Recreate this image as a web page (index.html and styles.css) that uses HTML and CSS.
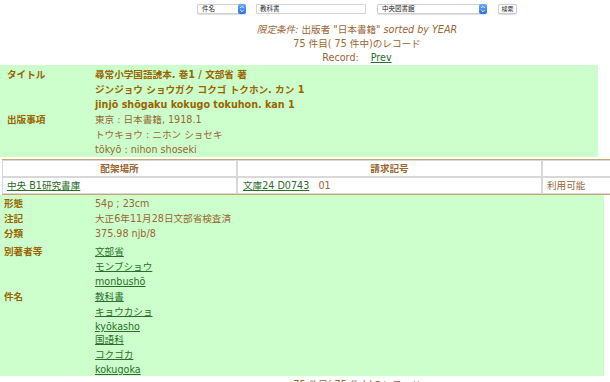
FILE: index.html
```html
<!DOCTYPE html>
<html lang="ja">
<head>
<meta charset="utf-8">
<title>書誌詳細</title>
<link rel="stylesheet" href="styles.css">
</head>
<body>
<div class="page">
  <form class="search">
    <div class="sel sel-field"><span>件名</span><span class="step"><svg viewBox="0 0 8 10" width="8" height="10"><path d="M2.3 4 L4 2.3 L5.7 4 M2.3 6 L4 7.7 L5.7 6" fill="none" stroke="#fff" stroke-width="0.9"/></svg></span></div>
    <div class="inp">教科書</div>
    <div class="sel sel-lib"><span>中央図書館</span><span class="step"><svg viewBox="0 0 8 10" width="8" height="10"><path d="M2.3 4 L4 2.3 L5.7 4 M2.3 6 L4 7.7 L5.7 6" fill="none" stroke="#fff" stroke-width="0.9"/></svg></span></div>
    <div class="btn">検索</div>
  </form>

  <div class="info">
    <div><i>限定条件:</i> 出版者 "日本書籍" <i>sorted by YEAR</i></div>
    <div>75 件目( 75 件中)のレコード</div>
    <div>Record:<span class="sp"></span><a href="#">Prev</a></div>
  </div>

  <div class="box box1">
    <div class="row">
      <div class="lbl">タイトル</div>
      <div class="val b">
        <div>尋常小学国語読本. 巻1 / 文部省 著</div>
        <div>ジンジョウ ショウガク コクゴ トクホン. カン 1</div>
        <div>jinjō shōgaku kokugo tokuhon. kan 1</div>
      </div>
    </div>
    <div class="row">
      <div class="lbl">出版事項</div>
      <div class="val">
        <div>東京 : 日本書籍, 1918.1</div>
        <div>トウキョウ : ニホン ショセキ</div>
        <div>tōkyō : nihon shoseki</div>
      </div>
    </div>
  </div>

  <div class="hold">
    <div class="hrow head">
      <div class="cell c1">配架場所</div>
      <div class="cell c2">請求記号</div>
      <div class="cell c3"></div>
    </div>
    <div class="hrow">
      <div class="cell c1"><a href="#">中央 B1研究書庫</a></div>
      <div class="cell c2"><a href="#">文庫24 D0743</a>&nbsp;&nbsp; 01</div>
      <div class="cell c3">利用可能</div>
    </div>
  </div>

  <div class="box box2">
    <div class="row"><div class="lbl">形態</div><div class="val"><div>54p ; 23cm</div></div></div>
    <div class="row"><div class="lbl">注記</div><div class="val"><div>大正6年11月28日文部省検査済</div></div></div>
    <div class="row"><div class="lbl">分類</div><div class="val"><div>375.98 njb/8</div></div></div>
    <div class="row gap"><div class="lbl">別著者等</div><div class="val">
      <div><a href="#">文部省</a></div>
      <div><a href="#">モンブショウ</a></div>
      <div><a href="#">monbushō</a></div>
    </div></div>
    <div class="row"><div class="lbl">件名</div><div class="val">
      <div><a href="#">教科書</a></div>
      <div><a href="#">キョウカショ</a></div>
      <div><a href="#">kyōkasho</a></div>
      <div class="tight"><a href="#">国語科</a></div>
      <div><a href="#">コクゴカ</a></div>
      <div><a href="#">kokugoka</a></div>
    </div></div>
  </div>

  <div class="foot">75 件目( 75 件中)のレコード</div>
</div>
</body>
</html>
```
FILE: styles.css
```css
html, body {
  margin: 0;
  padding: 0;
  overflow: hidden;
  background: #fff;
}
body {
  font-family: "DejaVu Sans", "Noto Sans CJK JP", sans-serif;
  font-size: 9.6px;
  color: #996633;
}
a {
  color: #2a6e2a;
  text-decoration: underline;
}
.page {
  width: 714px;
}

/* search form */
.search {
  display: flex;
  justify-content: center;
  align-items: center;
  margin: 0;
  padding-top: 4px;
  height: 10px;
}
.sel, .inp, .btn {
  box-sizing: border-box;
  height: 10px;
  background: #fff;
  border: 1px solid #cfcfcf;
  font-size: 6.5px;
  line-height: 8px;
  color: #222;
}
.sel {
  display: flex;
  justify-content: space-between;
  align-items: stretch;
  border-radius: 2px;
  padding-left: 4px;
  box-shadow: 0 0.5px 1px rgba(0, 0, 0, 0.12);
}
.sel-field { width: 49px; }
.sel-lib { width: 110px; margin-left: 11px; }
.step {
  width: 8px;
  margin: -1px -1px -1px 0;
  border-radius: 2px;
  background: linear-gradient(#6aaaf7, #2c72e4);
  display: flex;
  align-items: center;
}
.step svg { display: block; }
.inp {
  width: 110px;
  margin-left: 10px;
  padding-left: 3px;
  border-color: #d6d6d6;
}
.btn {
  width: 19px;
  margin-left: 11px;
  border-radius: 2px;
  text-align: center;
  font-size: 6px;
  box-shadow: 0 0.5px 1px rgba(0, 0, 0, 0.15);
}

/* info */
.info {
  margin-top: 9px;
  text-align: center;
  line-height: 14px;
}
.info .sp {
  display: inline-block;
  width: 12px;
}

/* boxes */
.box {
  background: #ccffcc;
  line-height: 15px;
}
.box1 {
  width: 598px;
  padding-top: 2px;
}
.box2 {
  width: 604px;
  padding-top: 1px;
  height: 181px;
  box-sizing: border-box;
}
.row {
  display: grid;
}
.box1 .row { grid-template-columns: 88px 1fr; padding-left: 7px; }
.box2 .row { grid-template-columns: 91px 1fr; padding-left: 4px; }
.row.gap { margin-top: 3px; }
.lbl {
  font-weight: bold;
  color: #996600;
}
.val.b {
  font-weight: bold;
  color: #996600;
}
.tight { margin-top: -2px; }

/* holdings table */
.hold {
  margin: 2px 0 0 2px;
  width: 710px;
  border-top: 1px solid #c9a770;
  border-bottom: 1px solid #c9a770;
  line-height: 15px;
}
.hrow {
  display: grid;
  grid-template-columns: 235px 305px 170px;
}
.cell {
  border: 1px solid #d8d8d8;
  padding-left: 4px;
  height: 15px;
  white-space: nowrap;
}
.cell.c2 { padding-left: 5px; }
.cell.c3 { border-right: 0; }
.head .cell {
  font-weight: bold;
  text-align: center;
  padding-left: 0;
}

.foot {
  margin-top: 2px;
  text-align: center;
  line-height: 14px;
}
```
